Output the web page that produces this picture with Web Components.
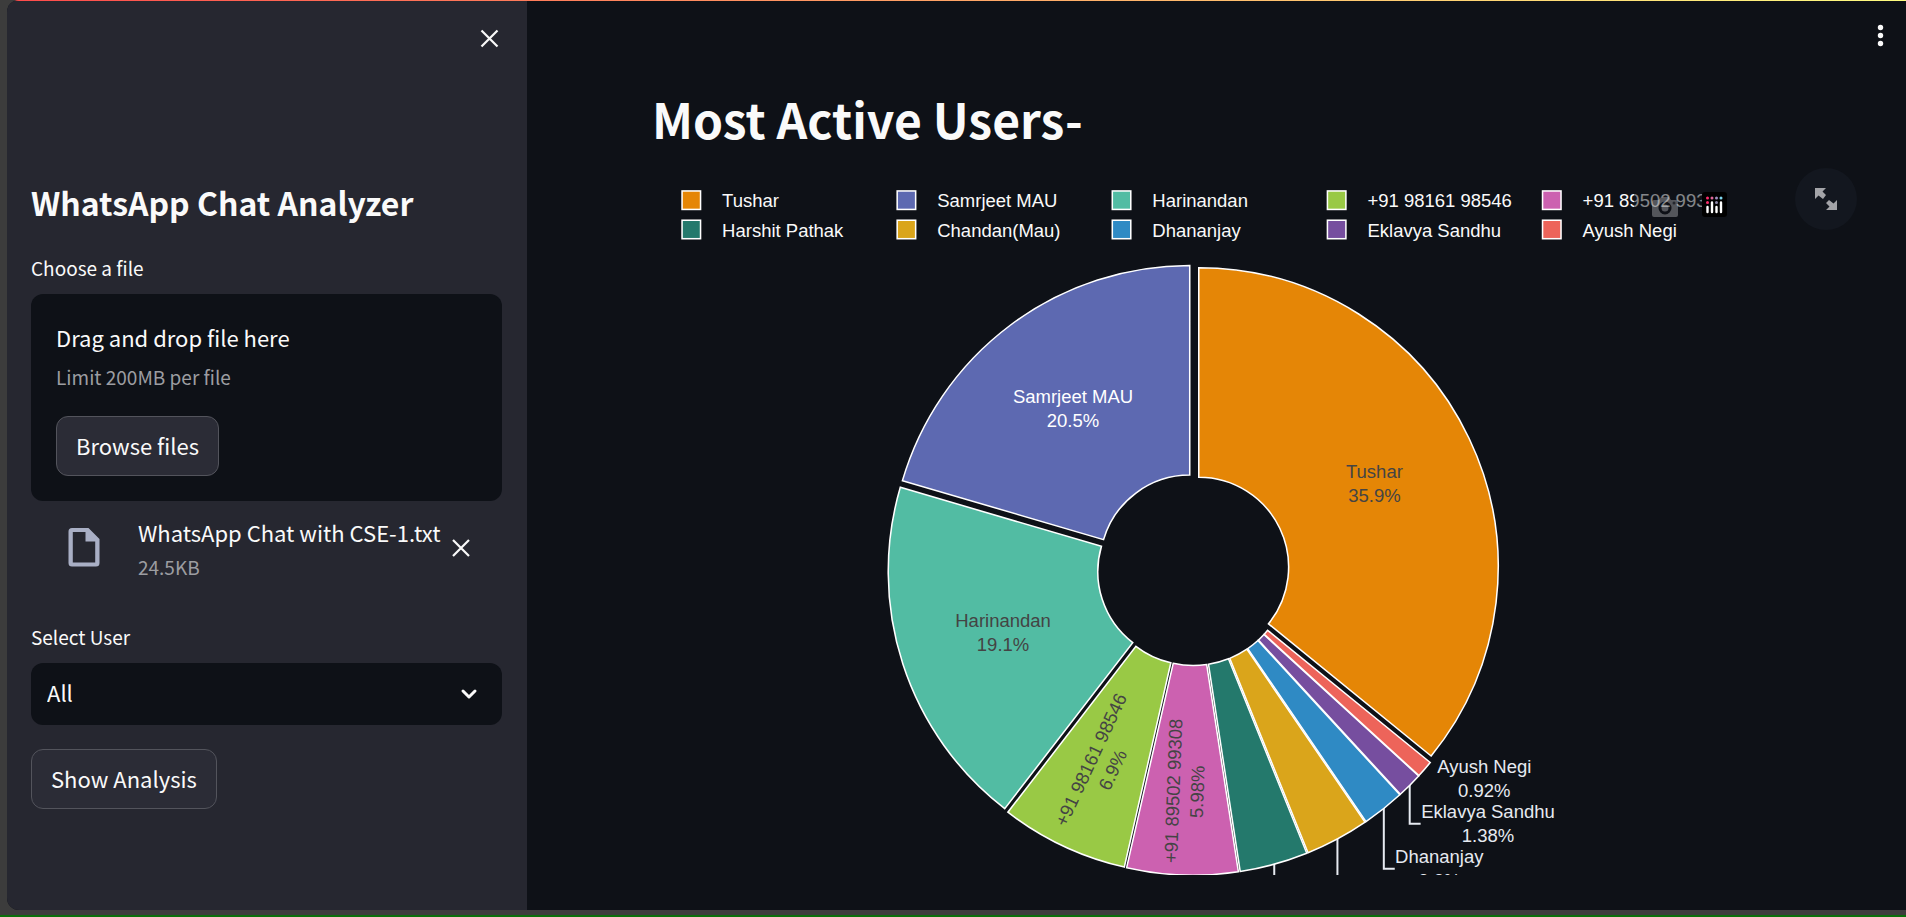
<!DOCTYPE html>
<html lang="en">
<head>
<meta charset="utf-8">
<title>WhatsApp Chat Analyzer</title>
<style>
  html, body { margin: 0; }
  body {
    background: #3c3c3c;
    color: #fafafa;
    font-family: "Noto Sans CJK JP", "Noto Sans CJK SC", "Noto Sans", sans-serif;
    font-size: 22px;
    line-height: 36px;
  }
</style>
</head>
<body>
<app-shell>
  <app-sidebar slot="sidebar">
    <side-title>WhatsApp Chat Analyzer</side-title>
    <file-uploader label="Choose a file" limit="Limit 200MB per file" filename="WhatsApp Chat with CSE-1.txt" size="24.5KB"></file-uploader>
    <select-box label="Select User" options="All,Tushar,Samrjeet MAU,Harinandan"></select-box>
    <app-button>Show Analysis</app-button>
  </app-sidebar>
  <section-title>Most Active Users-</section-title>
  <chart-frame><donut-chart></donut-chart></chart-frame>
</app-shell>

<script>
const define = (name, html, setup) => {
  const template = document.createElement('template');
  template.innerHTML = html;
  customElements.define(name, class extends HTMLElement {
    constructor() {
      super();
      this.attachShadow({ mode: 'open' }).append(template.content.cloneNode(true));
    }
    connectedCallback() {
      if (setup && !this.ready) { this.ready = true; setup(this, this.shadowRoot); }
    }
  });
};

define('app-shell', `
  <style>
    :host { display: flex; flex-direction: column; min-height: 100vh; box-sizing: border-box; padding-left: 7px; border-bottom: 2px solid #0a6e0a; }
    .app { flex: 1; display: grid; grid-template-columns: 520px minmax(0, 1fr); margin-bottom: 5px; background: #0e1117; border-radius: 12px 0 0 12px; overflow: hidden; position: relative; }
    .rainbow { position: absolute; inset: 0 0 auto 0; height: 1px; background: linear-gradient(90deg, #ff4b4b, #fffd80); }
    main { position: relative; box-sizing: border-box; padding: 78px 126px 32px 125px; }
    .menu { position: absolute; top: 15px; right: 6px; width: 40px; height: 40px; border: 0; padding: 0; background: none; }
    svg { display: block; }
  </style>
  <div class="app">
    <slot name="sidebar"></slot>
    <main>
      <slot></slot>
      <button class="menu" aria-label="Main menu">
        <svg width="40" height="40" viewBox="0 0 40 40" fill="#fafafa"><circle cx="20.500" cy="12.500" r="2.7"/><circle cx="20.500" cy="20.500" r="2.7"/><circle cx="20.500" cy="28.500" r="2.7"/></svg>
      </button>
    </main>
    <div class="rainbow"></div>
  </div>`);

define('app-sidebar', `
  <style>
    :host { display: block; box-sizing: border-box; padding: 24px 25px 24px 24px; background: #262730; }
    header { display: flex; justify-content: flex-end; height: 154px; }
    button { width: 26px; height: 28px; padding: 0; border: 0; background: none; }
    svg { display: block; }
  </style>
  <header>
    <button aria-label="Close sidebar"><svg width="26" height="28" viewBox="0 0 26 28" stroke="#fafafa" stroke-width="2.2"><path d="M5.500 6.500l16 16M21.500 6.500l-16 16"/></svg></button>
  </header>
  <slot></slot>`);

define('side-title', `
  <style>
    :host { display: block; margin-bottom: 28px; }
    h1 { margin: 0; font-size: 32px; line-height: 48px; font-weight: 700; }
  </style>
  <h1><slot></slot></h1>`);

define('section-title', `
  <style>
    :host { display: block; margin-bottom: 16px; }
    h1 { margin: 0; font-size: 48px; line-height: 80px; font-weight: 700; }
  </style>
  <h1><slot></slot></h1>`);

define('app-button', `
  <style>
    :host { display: block; }
    button { height: 60px; padding: 0 19px 2px; border: 1px solid #53545c; border-radius: 12px; background: #2b2c36; color: inherit; font: inherit; white-space: nowrap; }
  </style>
  <button type="button"><slot></slot></button>`);

define('file-uploader', `
  <style>
    :host { display: block; margin-bottom: 42px; }
    .label { display: block; font-size: 19px; line-height: 28px; margin-bottom: 12px; }
    .drop { padding: 25px; background: #0e1117; border-radius: 12px; }
    p { margin: 0; }
    .small { font-size: 19px; line-height: 28px; color: #9c9da1; }
    .drop .small { margin: 8px 0 25px; }
    .file { display: flex; align-items: center; margin-top: 13px; padding: 0 24px 0 30px; }
    .doc { flex: none; margin-right: 31px; }
    .name { white-space: nowrap; flex: 1; }
    .name .small { margin: 3px 0 0; }
    .remove { width: 34px; height: 28px; padding: 0; border: 0; background: none; }
    svg { display: block; }
  </style>
  <span class="label" id="label"></span>
  <section class="drop" aria-labelledby="label">
    <p>Drag and drop file here</p>
    <p class="small limit"></p>
    <app-button>Browse files</app-button>
  </section>
  <div class="file">
    <svg class="doc" width="46" height="46" viewBox="0 0 46 46"><path fill="#a9afc5" fill-rule="evenodd" d="M11 3h16.500L38.500 14v24a3.500 3.500 0 0 1-3.500 3.500H11A3.500 3.500 0 0 1 7.500 38V6.500A3.500 3.500 0 0 1 11 3zM11.800 7v30.500h22.400V16.500H24.500V7z"/></svg>
    <div class="name"><p class="filename"></p><p class="small size"></p></div>
    <button class="remove" aria-label="Remove file"><svg width="34" height="28" viewBox="0 0 34 28" stroke="#fafafa" stroke-width="2.2"><path d="M9 6l16 16M25 6l-16 16"/></svg></button>
  </div>`, (el, root) => {
  root.querySelector('.label').textContent = el.getAttribute('label');
  root.querySelector('.limit').textContent = el.getAttribute('limit');
  root.querySelector('.filename').textContent = el.getAttribute('filename');
  root.querySelector('.size').textContent = el.getAttribute('size');
});

define('select-box', `
  <style>
    :host { display: block; margin-bottom: 24px; }
    label { display: block; font-size: 19px; line-height: 28px; margin-bottom: 12px; }
    .box { position: relative; }
    select { appearance: none; display: block; width: 100%; height: 62px; padding: 0 48px 4px 16px; border: 0; border-radius: 12px; background: #0e1117; color: inherit; font: inherit; }
    svg { position: absolute; right: 20px; top: 18px; pointer-events: none; }
  </style>
  <label for="user"></label>
  <div class="box">
    <select id="user"></select>
    <svg width="26" height="26" viewBox="0 0 26 26" fill="none" stroke="#fafafa" stroke-width="3" stroke-linecap="round" stroke-linejoin="round"><path d="M7 10l6 6 6-6"/></svg>
  </div>`, (el, root) => {
  root.querySelector('label').textContent = el.getAttribute('label');
  for (const name of el.getAttribute('options').split(',')) root.querySelector('select').add(new Option(name));
});

define('chart-frame', `
  <style>
    :host { display: block; position: relative; }
    .bar { position: absolute; right: 51px; top: 13px; display: flex; gap: 24px; padding: 5px 2px 5px 18px; background: rgba(14, 17, 23, .5); }
    button { padding: 0; border: 0; background: none; }
    svg { display: block; }
    .full { position: absolute; right: -77px; top: -6px; width: 62px; height: 62px; display: grid; place-items: center; border-radius: 50%; background: #13171f; }
  </style>
  <slot></slot>
  <div class="bar">
    <button aria-label="Download plot as a png"><svg width="26" height="26" viewBox="0 0 26 26"><path fill="#fafafa" fill-opacity=".3" fill-rule="evenodd" d="M2 8h5l2-3h8l2 3h5a2 2 0 0 1 2 2v13a2 2 0 0 1-2 2H2a2 2 0 0 1-2-2V10a2 2 0 0 1 2-2zM13 9.500a6.500 6.500 0 1 0 0 13 6.500 6.500 0 0 0 0-13zm0 3a3.500 3.500 0 1 1 0 7 3.500 3.500 0 0 1 0-7z"/><circle cx="22" cy="11" r="1.500" fill="#24272e"/></svg></button>
    <button aria-label="Produced with Plotly"><svg width="25" height="26" viewBox="0 0 25 26"><rect width="25" height="25" rx="3"/><g fill="#ff2c6d"><circle cx="5.500" cy="6" r="1.500"/><circle cx="5.500" cy="10.500" r="1.500"/></g><circle cx="10" cy="6" r="1.500" fill="#e0659a"/><circle cx="14.500" cy="6" r="1.500" fill="#a08fc0"/><circle cx="19" cy="6" r="1.500" fill="#7fd8f0"/><circle cx="14.500" cy="10.500" r="1.500" fill="#8d88a8"/><g stroke="#fff" stroke-width="2.400" stroke-linecap="round"><path d="M5.500 15v5M10 10.500V20M14.500 15v5M19 10.500V20"/></g></svg></button>
  </div>
  <button class="full" aria-label="View fullscreen"><svg width="22" height="22" viewBox="0 0 22 22" fill="#a3a4a8"><path d="M0 0h11L7.500 3.500 11 7 8 11 3.500 7.500 0 11zM22 22H11l3.500-3.500L11 15l3-3 4.500 3.500L22 12z"/></svg></button>`);

define('donut-chart', `
  <style>
    :host { display: block; }
    svg { display: block; width: 100%; height: auto; font-family: "Liberation Sans", Arial, sans-serif; font-size: 12px; }
  </style>
  <svg viewBox="0 0 732 455" role="img" aria-label="Most active users"></svg>`, (el, root) => {
  const LINE = 15.6;
  const cx = 351.3, cy = 256.8, R = 194.3, hole = 0.3, pull = 3.9;
  const OUT = '#e6eaf1';
  // label: [x, baseline, rotation, colour, percentage]; lead: leader line to an outside label
  const users = [
    { name: 'Tushar', n: 156, color: '#E58606', label: [468.8, 197.2, 0, '#444', '35.9%'] },
    { name: 'Samrjeet MAU', n: 89, color: '#5D69B1', label: [273.2, 148.9, 0, '#fff', '20.5%'] },
    { name: 'Harinandan', n: 83, color: '#52BCA3', label: [227.8, 293.9, 0, '#444', '19.1%'] },
    { name: '+91 98161 98546', n: 30, color: '#99C945', label: [288.6, 381.9, -64.8, '#444', '6.9%'] },
    { name: '+91 89502 99308', n: 26, color: '#CC61B0', label: [342.4, 400.5, -87.9, '#444', '5.98%'] },
    { name: 'Harshit Pathak', n: 16, color: '#24796C', lead: 'M403.8 447V470' },
    { name: 'Chandan(Mau)', n: 15, color: '#DAA51B', lead: 'M444.8 431V470' },
    { name: 'Dhananjay', n: 10, color: '#2F8AC4', label: [510.9, 447, 0, OUT, '2.3%'], lead: 'M474.9 411V450.8H482' },
    { name: 'Eklavya Sandhu', n: 6, color: '#764E9F', label: [542.5, 418.1, 0, OUT, '1.38%'], lead: 'M491.7 396V421.6H498.8' },
    { name: 'Ayush Negi', n: 4, color: '#ED645A', label: [540.1, 388.7, 0, OUT, '0.92%'] },
  ];
  const total = users.reduce((sum, u) => sum + u.n, 0);
  const at = (x, y, r, a) => (x + r * Math.sin(a)).toFixed(2) + ' ' + (y - r * Math.cos(a)).toFixed(2);
  // The first slice runs clockwise from the top; the others follow counter-clockwise.
  let edge = users[0].n / total * 2 * Math.PI;
  let slices = '', leads = '', labels = '', legend = '';
  users.forEach((u, i) => {
    const b = edge, a = edge - u.n / total * 2 * Math.PI, mid = (a + b) / 2;
    edge = a;
    const x = cx + pull * Math.sin(mid), y = cy - pull * Math.cos(mid), r = R * hole;
    slices += `<path fill="${u.color}" stroke="#fff" d="M${at(x, y, R, a)}A${R} ${R} 0 0 1 ${at(x, y, R, b)}L${at(x, y, r, b)}A${r} ${r} 0 0 0 ${at(x, y, r, a)}Z"/>`;
    if (u.lead) leads += `<path d="${u.lead}" fill="none" stroke="${OUT}" stroke-width="1.3"/>`;
    if (u.label) {
      const [lx, ly, rot, fill, pct] = u.label;
      labels += `<g transform="translate(${lx} ${ly}) rotate(${rot})" fill="${fill}" text-anchor="middle"><text>${u.name}</text><text y="${LINE}">${pct}</text></g>`;
    }
    const gx = 25.5 + (i % 5) * 139.6, gy = 17 + Math.floor(i / 5) * 19;
    legend += `<rect x="${gx - 6}" y="${gy - 6}" width="12" height="12" fill="${u.color}" stroke="#fff"/><text x="${gx + 20}" y="${gy + 4.7}" fill="#fafafa">${u.name}</text>`;
  });
  root.querySelector('svg').innerHTML = leads + slices + labels + legend;
});
</script>
</body>
</html>
